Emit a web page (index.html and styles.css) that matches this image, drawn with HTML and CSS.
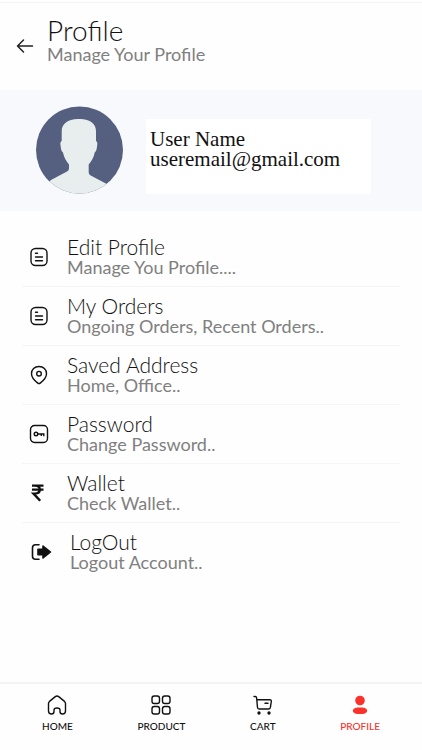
FILE: index.html
```html
<!DOCTYPE html>
<html lang="en">
<head>
<meta charset="utf-8">
<meta name="viewport" content="width=device-width, initial-scale=1">
<title>Profile</title>
<link rel="stylesheet" href="styles.css">
</head>
<body>
<div class="app">
  <header class="topbar">
    <button class="back" type="button" aria-label="Back">
      <svg width="18" height="16" viewBox="0 0 18 16" fill="none" stroke="currentColor" stroke-width="1.500" stroke-linecap="round" stroke-linejoin="round"><path d="M16.500 8H1.500M7.500 2L1.500 8l6 6"/></svg>
    </button>
    <div>
      <h1 class="page-title">Profile</h1>
      <p class="page-sub">Manage Your Profile</p>
    </div>
  </header>
  <main class="main">
    <section class="user">
      <svg class="avatar" width="88" height="88" viewBox="0 0 88 88" role="img" aria-label="Avatar">
        <clipPath id="disc"><circle cx="44.500" cy="44" r="43.500"/></clipPath>
        <g clip-path="url(#disc)">
          <rect width="88" height="88" fill="#556080"/>
          <path fill="#e7eeed" d="M45 13c10.500 0 16 5 16 12v10c1.500.5 1.500 3 1 5.500-.3 3-.8 5-2.300 6-1 5-3 8-6 12v8q0 2 2 3l17 9 4 4v14H12V78l4-4 16-8.500q2-1 2-3v-4c-3-4-5-7-6-12-1.500-1-2-3-2.300-6-.5-2.500-.5-5 1-5.500V25c0-7 5.800-12 16.300-12z"/>
        </g>
      </svg>
      <div class="user-card">
        <p>User Name</p>
        <p>useremail@gmail.com</p>
      </div>
    </section>
    <nav class="menu" aria-label="Account">
      <a class="row" href="#edit">
        <svg width="20" height="20" viewBox="0 0 20 20" fill="none" stroke="currentColor" stroke-width="1.400" stroke-linecap="round"><rect x="2" y="1.500" width="16" height="17" rx="4.500"/><path d="M6.500 6.200h2M6.500 10h7M6.500 13.800h7"/></svg>
        <span class="label"><span class="name">Edit Profile</span><span class="hint">Manage You Profile....</span></span>
      </a>
      <a class="row" href="#orders">
        <svg width="20" height="20" viewBox="0 0 20 20" fill="none" stroke="currentColor" stroke-width="1.400" stroke-linecap="round"><rect x="2" y="1.500" width="16" height="17" rx="4.500"/><path d="M6.500 6.200h2M6.500 10h7M6.500 13.800h7"/></svg>
        <span class="label"><span class="name">My Orders</span><span class="hint">Ongoing Orders, Recent Orders..</span></span>
      </a>
      <a class="row" href="#address">
        <svg width="20" height="20" viewBox="0 0 20 20" fill="none" stroke="currentColor" stroke-width="1.400" stroke-linejoin="round"><path d="M10 1.500c-4.500 0-7.500 3.200-7.500 7.200 0 3.800 2.500 6.500 6.300 9.400.8.600 1.600.6 2.400 0 3.800-2.900 6.300-5.600 6.300-9.400 0-4-3-7.200-7.500-7.200z"/><circle cx="10" cy="8.700" r="2.300"/></svg>
        <span class="label"><span class="name">Saved Address</span><span class="hint">Home, Office..</span></span>
      </a>
      <a class="row" href="#password">
        <svg width="20" height="20" viewBox="0 0 20 20" fill="none" stroke="currentColor" stroke-width="1.400"><rect x="1.500" y="1.500" width="17" height="17" rx="4"/><circle cx="7" cy="10" r="1.800"/><path d="M8.800 10h6v2.300M12.300 10v2"/></svg>
        <span class="label"><span class="name">Password</span><span class="hint">Change Password..</span></span>
      </a>
      <a class="row" href="#wallet">
        <svg width="20" height="20" viewBox="0 0 20 20" fill="none" stroke="currentColor" stroke-width="2.400"><path d="M3 2.600h11.500M3 6.600h11.500M3 2.600h3c3.200 0 4.800 1.600 4.800 4s-1.600 4-4.800 4H4.500l6.700 7.200"/></svg>
        <span class="label"><span class="name">Wallet</span><span class="hint">Check Wallet..</span></span>
      </a>
      <a class="row" href="#logout">
        <svg width="23" height="20" viewBox="0 0 23 20" fill="none" stroke="currentColor" stroke-width="1.600" stroke-linecap="round" stroke-linejoin="round"><path d="M10 2.800H6.500Q3.500 2.800 3.500 5.800v8.400q0 3 3 3H10"/><path fill="currentColor" d="M9 7.300h5V4l7.500 6-7.500 6v-3.300H9z"/></svg>
        <span class="label"><span class="name">LogOut</span><span class="hint">Logout Account..</span></span>
      </a>
    </nav>
  </main>
  <nav class="tabs" aria-label="Main">
    <a class="tab" href="#home">
      <svg width="22" height="22" viewBox="0 0 22 22" fill="none" stroke="currentColor" stroke-width="1.400" stroke-linejoin="round"><path d="M9.300 2.600L3.500 7.400Q2.500 8.300 2.500 9.600V17q0 3 3 3 2.500 0 2.500-2.500V16q0-2 3-2t3 2v1.500Q14 20 16.500 20q3 0 3-3V9.600q0-1.300-1-2.200l-5.800-4.800q-1.700-1.300-3.400 0z"/></svg>
      <span>HOME</span>
    </a>
    <a class="tab" href="#product">
      <svg width="22" height="22" viewBox="0 0 22 22" fill="none" stroke="currentColor" stroke-width="1.400"><rect x="2" y="2" width="7.500" height="7.500" rx="2.200"/><rect x="12.500" y="2" width="7.500" height="7.500" rx="2.200"/><rect x="2" y="12.500" width="7.500" height="7.500" rx="2.200"/><rect x="12.500" y="12.500" width="7.500" height="7.500" rx="2.200"/></svg>
      <span>PRODUCT</span>
    </a>
    <a class="tab" href="#cart">
      <svg width="22" height="22" viewBox="0 0 22 22" fill="none" stroke="currentColor" stroke-width="1.400" stroke-linecap="round" stroke-linejoin="round"><path d="M2 2.500h1.200q1.300 0 1.400 1.300l.9 9.700q.1 1.500 1.600 1.500h9.300q1.700 0 2-1.600l.9-6q.2-1.700-1.500-1.700H5M13 9.200h3"/><circle cx="7" cy="19" r="1" fill="currentColor"/><circle cx="17" cy="19" r="1" fill="currentColor"/></svg>
      <span>CART</span>
    </a>
    <a class="tab tab-active" href="#profile" aria-current="page">
      <svg width="22" height="22" viewBox="0 0 22 22" fill="currentColor"><circle cx="11" cy="6.500" r="4.800"/><rect x="3.800" y="13.500" width="14.400" height="6.500" rx="5" ry="3.250"/></svg>
      <span>PROFILE</span>
    </a>
  </nav>
</div>
</body>
</html>
```
FILE: styles.css
```css
* { box-sizing: border-box; }
body {
  margin: 0;
  background: #fefefe;
  color: #111;
  font-family: Lato, "Open Sans", sans-serif;
  font-weight: 300;
}
h1, p { margin: 0; font-weight: inherit; }
a { color: inherit; text-decoration: none; }
svg { display: block; flex: none; }
.app {
  display: flex;
  flex-direction: column;
  min-height: 100vh;
  padding-top: 2px;
}
.topbar {
  display: flex;
  align-items: center;
  gap: 13px;
  padding: 13px 16px 26px;
  border-top: 1px solid #f4f4f4;
}
.back {
  display: flex;
  padding: 12px 0 0;
  border: 0;
  background: none;
  color: #222;
}
.page-title { font-size: 28px; line-height: 28px; }
.page-sub { font-size: 18px; line-height: 20px; font-weight: 400; color: #808080; }
.main { flex: 1; }
.user {
  display: flex;
  align-items: flex-end;
  gap: 23px;
  padding: 16px 51px 17px 35px;
  background: #f7f9fc;
}
.user-card {
  flex: 1;
  min-height: 75px;
  padding: 10px 4px;
  background: #fff;
  color: #111;
  font: 400 21px/20px "Liberation Serif", serif;
}
.menu { padding: 17px 22px; }
.row {
  display: flex;
  align-items: center;
  gap: 18px;
  padding: 9px 8px 9px 7px;
  border-bottom: 1px solid #f5f5f5;
}
.row:last-child { border-bottom: 0; }
.label { display: flex; flex-direction: column; }
.name { font-size: 21px; line-height: 20px; }
.hint { font-size: 18px; line-height: 20px; font-weight: 400; color: #808080; }
.tabs {
  display: flex;
  justify-content: space-between;
  padding: 10px 42px 18px;
  border-top: 2px solid #f3f3f3;
}
.tab {
  display: flex;
  flex-direction: column;
  align-items: center;
  gap: 4px;
  font-size: 10px;
  line-height: 12px;
  font-weight: 500;
}
.tab-active { color: #f9322c; }
```
